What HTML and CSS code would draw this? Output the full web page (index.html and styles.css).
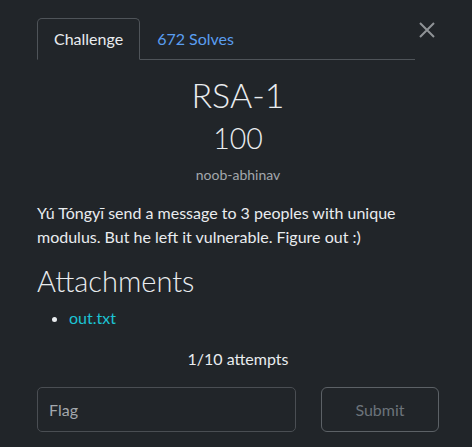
FILE: index.html
```html
<!DOCTYPE html>
<html lang="en">
<head>
<meta charset="utf-8">
<title>RSA-1</title>
<link rel="stylesheet" href="styles.css">
</head>
<body>
<div class="modal">
  <div class="header">
    <ul class="tabs">
      <li class="tab active">Challenge</li>
      <li class="tab">672 Solves</li>
    </ul>
    <button class="close" aria-label="Close">
      <svg width="16" height="16" viewBox="0 0 16 16"><path d="M1 1 L15 15 M15 1 L1 15" stroke="#8f9396" stroke-width="2" fill="none"/></svg>
    </button>
  </div>
  <h2 class="title">RSA-1</h2>
  <h3 class="value">100</h3>
  <div class="author">noob-abhinav</div>
  <p class="desc">Yú Tóngyī send a message to 3 peoples with unique modulus. But he left it vulnerable. Figure out :)</p>
  <h2 class="attach-title">Attachments</h2>
  <ul class="files">
    <li><a class="file" href="#">out.txt</a></li>
  </ul>
  <div class="attempts">1/10 attempts</div>
  <div class="submit-row">
    <input class="flag" type="text" placeholder="Flag">
    <button class="submit">Submit</button>
  </div>
</div>
</body>
</html>
```

FILE: styles.css
```css
html, body {
  margin: 0;
  padding: 0;
  background: #212529;
}
body {
  font-family: Lato, "Open Sans", sans-serif;
  color: #e9ecef;
  font-size: 16px;
  line-height: 1.5;
}
.modal {
  padding: 18px 33px 0 37px;
}
.header {
  display: flex;
  align-items: flex-start;
}
.tabs {
  flex: 1;
  display: flex;
  list-style: none;
  margin: 0;
  padding: 0;
  border-bottom: 1px solid #4f5459;
}
.tab {
  padding: 8px 16px;
  margin-bottom: -1px;
  border: 1px solid transparent;
  border-top-left-radius: 5px;
  border-top-right-radius: 5px;
  color: #5a9ef0;
  line-height: 24px;
}
.tab.active {
  color: #e9ecef;
  border-color: #4f5459 #4f5459 #212529;
  background: #212529;
}
.close {
  width: 24px;
  height: 24px;
  padding: 0;
  margin-top: 0;
  background: none;
  border: 0;
  display: flex;
  align-items: center;
  justify-content: center;
}
.title {
  margin: 15px 0 0;
  text-align: center;
  font-weight: 300;
  font-size: 34px;
  line-height: 1.2;
}
.value {
  margin: 5px 0 0;
  text-align: center;
  font-weight: 300;
  font-size: 28.5px;
  line-height: 1.2;
}
.author {
  margin-top: 9px;
  text-align: center;
  font-size: 14px;
  color: #a3a8ad;
}
.desc {
  margin: 16px 0 0;
}
.attach-title {
  margin: 15px 0 0;
  font-weight: 300;
  font-size: 29px;
  line-height: 1.2;
}
.files {
  margin: 7px 0 0;
  padding-left: 32px;
}
.file {
  color: #1cc3d4;
  text-decoration: none;
}
.files li::marker {
  color: #e9ecef;
}
.attempts {
  margin-top: 17px;
  text-align: center;
}
.submit-row {
  display: flex;
  gap: 25px;
  margin-top: 16px;
}
.flag {
  flex: 1;
  min-width: 0;
  height: 45px;
  box-sizing: border-box;
  padding: 0 11px;
  background: #212529;
  border: 1px solid #4a4e53;
  border-radius: 5px;
  font-family: inherit;
  font-size: 16px;
  color: #e9ecef;
}
.flag::placeholder {
  color: #a3a8ad;
}
.submit {
  width: 118px;
  height: 45px;
  box-sizing: border-box;
  background: #212529;
  border: 1px solid #5c6166;
  border-radius: 6px;
  font-family: inherit;
  font-size: 16px;
  color: #6c737a;
}
```
